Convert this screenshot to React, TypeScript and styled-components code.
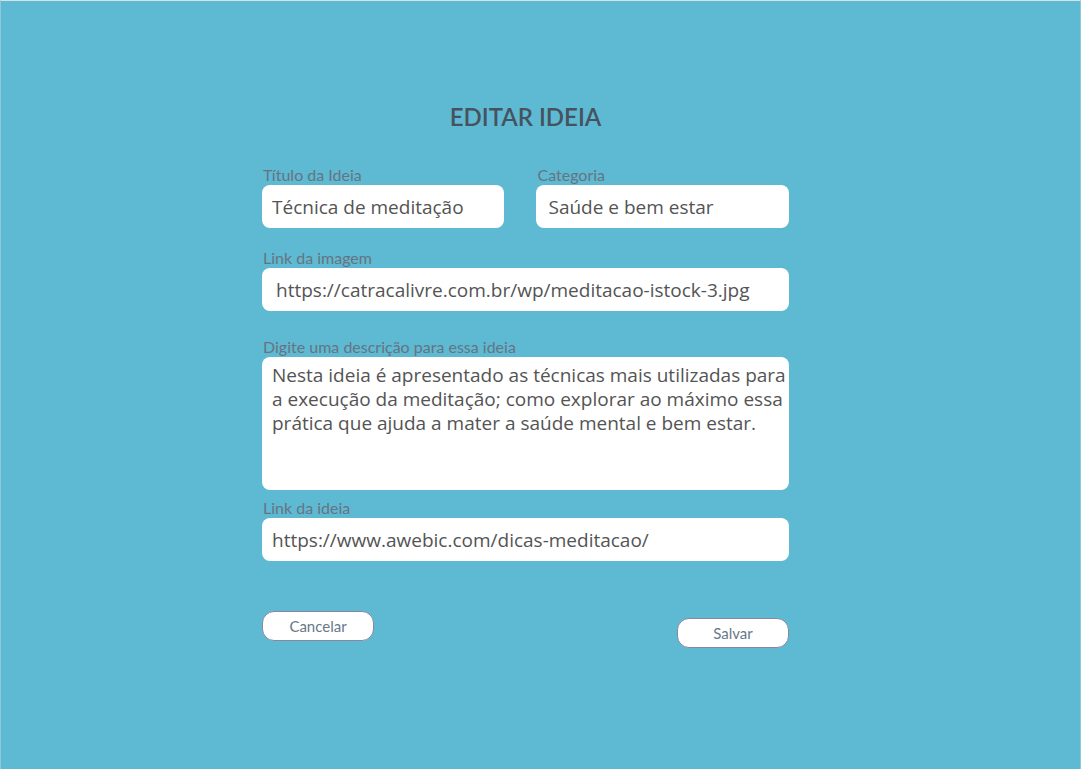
import React from "react";
import styled, { createGlobalStyle } from "styled-components";

const GlobalStyle = createGlobalStyle`
  * { box-sizing: border-box; }
  body { margin: 0; background: #5eb9d2; }
`;

const Page = styled.main`
  min-height: 100vh;
  padding: 100px 54px 24px 24px;
  border: 1px solid #8fc8d9;
  border-top-color: #d5e3e8;
  border-bottom: 0;
  background: #5eb9d2;
`;

const Form = styled.form`
  width: 100%;
  max-width: 527px;
  margin: 0 auto;
`;

const Title = styled.h1`
  margin: 0 0 34px;
  color: #46525e;
  font: 600 24px/32px Lato, sans-serif;
  text-align: center;
`;

const Row = styled.div`
  display: grid;
  grid-template-columns: 242fr 252fr;
  gap: 32px;
`;

const Field = styled.div<{ $gap: number }>`
  display: flex;
  flex-direction: column;
  margin-bottom: ${({ $gap }) => $gap}px;
`;

const Label = styled.label`
  padding: 0 0 2px 1px;
  color: #667482;
  font: 400 16px/16px Lato, sans-serif;
`;

const Input = styled.input<{ $inset?: number }>`
  width: 100%;
  height: 43px;
  padding: 0 8px 0 ${({ $inset = 10 }) => $inset}px;
  border: 0;
  border-radius: 8px;
  background: #fff;
  color: #545454;
  font: 19px/24px "Open Sans", sans-serif;
`;

const TextArea = styled.textarea`
  width: 100%;
  height: 133px;
  padding: 6px 0 0 10px;
  border: 0;
  border-radius: 8px;
  background: #fff;
  color: #545454;
  font: 19px/24px "Open Sans", sans-serif;
  resize: none;
`;

const Actions = styled.div`
  display: flex;
  justify-content: space-between;
  align-items: flex-start;
`;

const Button = styled.button<{ $drop?: number }>`
  width: 112px;
  height: 30px;
  margin-top: ${({ $drop = 0 }) => $drop}px;
  border: 1px solid #8488a0;
  border-radius: 12px;
  background: #fff;
  color: #68788a;
  font: 15px/18px Lato, sans-serif;
`;

export default function App() {
  return (
    <Page>
      <GlobalStyle />
      <Form>
        <Title>EDITAR IDEIA</Title>
        <Row>
          <Field $gap={22}>
            <Label htmlFor="title">Título da Ideia</Label>
            <Input id="title" defaultValue="Técnica de meditação" />
          </Field>
          <Field $gap={22}>
            <Label htmlFor="category">Categoria</Label>
            <Input id="category" $inset={12} defaultValue="Saúde e bem estar" />
          </Field>
        </Row>
        <Field $gap={28}>
          <Label htmlFor="image">Link da imagem</Label>
          <Input id="image" $inset={14} defaultValue="https://catracalivre.com.br/wp/meditacao-istock-3.jpg" />
        </Field>
        <Field $gap={10}>
          <Label htmlFor="description">Digite uma descrição para essa ideia</Label>
          <TextArea id="description" defaultValue="Nesta ideia é apresentado as técnicas mais utilizadas para a execução da meditação; como explorar ao máximo essa prática que ajuda a mater a saúde mental e bem estar." />
        </Field>
        <Field $gap={50}>
          <Label htmlFor="link">Link da ideia</Label>
          <Input id="link" defaultValue="https://www.awebic.com/dicas-meditacao/" />
        </Field>
        <Actions>
          <Button type="button">Cancelar</Button>
          <Button type="submit" $drop={7}>Salvar</Button>
        </Actions>
      </Form>
    </Page>
  );
}
